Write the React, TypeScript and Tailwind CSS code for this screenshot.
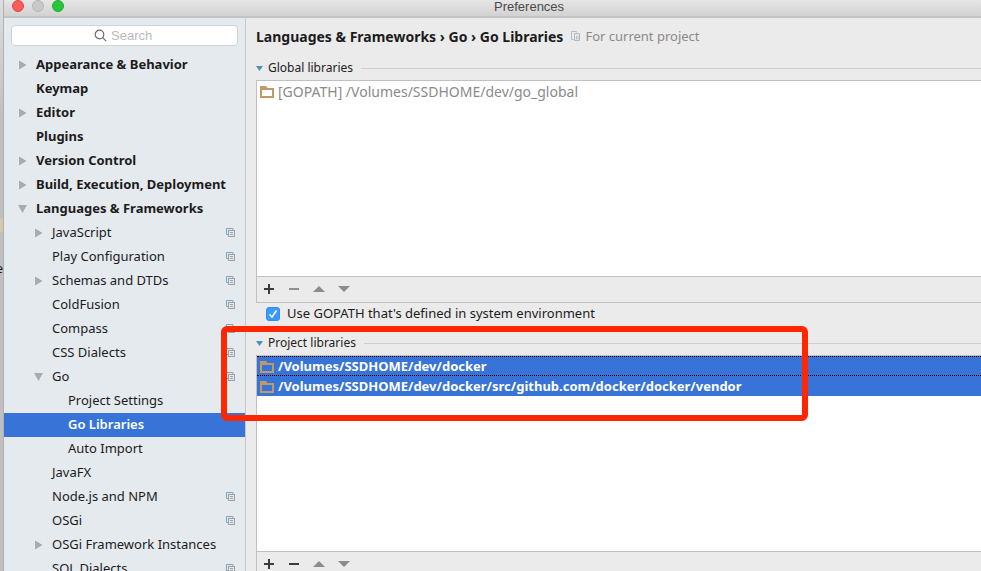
import { useState } from "react";

type Item = {
  label: string;
  level: 0 | 1 | 2;
  arrow?: "open" | "closed";
  project?: boolean;
};

const items: Item[] = [
  { label: "Appearance & Behavior", level: 0, arrow: "closed" },
  { label: "Keymap", level: 0 },
  { label: "Editor", level: 0, arrow: "closed" },
  { label: "Plugins", level: 0 },
  { label: "Version Control", level: 0, arrow: "closed" },
  { label: "Build, Execution, Deployment", level: 0, arrow: "closed" },
  { label: "Languages & Frameworks", level: 0, arrow: "open" },
  { label: "JavaScript", level: 1, arrow: "closed", project: true },
  { label: "Play Configuration", level: 1, project: true },
  { label: "Schemas and DTDs", level: 1, arrow: "closed", project: true },
  { label: "ColdFusion", level: 1, project: true },
  { label: "Compass", level: 1, project: true },
  { label: "CSS Dialects", level: 1, project: true },
  { label: "Go", level: 1, arrow: "open", project: true },
  { label: "Project Settings", level: 2 },
  { label: "Go Libraries", level: 2 },
  { label: "Auto Import", level: 2 },
  { label: "JavaFX", level: 1 },
  { label: "Node.js and NPM", level: 1, project: true },
  { label: "OSGi", level: 1, project: true },
  { label: "OSGi Framework Instances", level: 1, arrow: "closed" },
  { label: "SQL Dialects", level: 1, project: true },
];

const indent = { 0: "pl-3", 1: "pl-7", 2: "pl-11" };

function Arrow({ kind }: { kind?: "open" | "closed" }) {
  return (
    <svg width="12" height="12" viewBox="0 0 12 12" fill="#a9abad" className="shrink-0" aria-hidden="true">
      {kind === "closed" && <path d="M3 1.500l7.500 4.500L3 10.500z" />}
      {kind === "open" && <path d="M2 2h9L6.500 10z" />}
    </svg>
  );
}

function ProjectIcon() {
  return (
    <svg width="10" height="10" viewBox="0 0 10 10" fill="none" className="shrink-0" aria-hidden="true">
      <path d="M2.500 6.500h-2v-6h6.500v2" stroke="#7fa3bb" />
      <rect x="2.500" y="2.500" width="6" height="6" stroke="#9aa0a6" />
      <path d="M4 4.500h3M4 6.500h3" stroke="#9aa0a6" />
    </svg>
  );
}

function CopyIcon() {
  return (
    <svg width="10" height="11" viewBox="0 0 10 11" fill="none" className="shrink-0" aria-hidden="true">
      <path d="M2.500 8.500h-2v-8h5v1" stroke="#a9c0cf" />
      <path d="M3.500 2.500h5v7h-5z" stroke="#b4b7ba" />
      <path d="M5.500 4.500v4M7 4.500v4" stroke="#b4c4d0" />
    </svg>
  );
}

function Folder() {
  return (
    <svg width="14" height="12" viewBox="0 0 14 12" fill="none" className="shrink-0" aria-hidden="true">
      <path d="M0 0h6l1.500 2H14v10H0zM2 4v6h10V4z" fill="#bf9a66" fillRule="evenodd" />
    </svg>
  );
}

function SectionTitle({ children }: { children: string }) {
  return (
    <div className="flex h-5 items-center">
      <svg width="7" height="5" viewBox="0 0 7 5" fill="#4a93bd" className="mr-[5px] shrink-0" aria-hidden="true">
        <path d="M0 0h7L3.500 5z" />
      </svg>
      <h2 className="mr-2 text-[12px] text-[#222]">{children}</h2>
      <div className="h-px flex-1 bg-[#cfcfcf]" />
    </div>
  );
}

function Toolbar({ canRemove }: { canRemove: boolean }) {
  return (
    <div className="flex h-[26px] items-center gap-[11px] border-t border-[#c0c0c0] pb-px pl-[5px]">
      <button type="button" aria-label="Add" className="grid size-[14px] place-items-center">
        <svg width="10" height="10" viewBox="0 0 10 10" fill="#3c3c3c">
          <path d="M4 0h2v4h4v2H6v4H4V6H0V4h4z" />
        </svg>
      </button>
      <button type="button" aria-label="Remove" disabled={!canRemove} className="grid size-[14px] place-items-center">
        <svg width="10" height="10" viewBox="0 0 10 10" fill={canRemove ? "#3c3c3c" : "#8f8f8f"}>
          <path d="M0 4h10v2H0z" />
        </svg>
      </button>
      <button type="button" aria-label="Move up" disabled className="grid size-[14px] place-items-center">
        <svg width="12" height="6" viewBox="0 0 12 6" fill="#8c8c8c">
          <path d="M6 0l6 6H0z" />
        </svg>
      </button>
      <button type="button" aria-label="Move down" disabled className="grid size-[14px] place-items-center">
        <svg width="12" height="6" viewBox="0 0 12 6" fill="#8c8c8c">
          <path d="M0 0h12L6 6z" />
        </svg>
      </button>
    </div>
  );
}

export default function App() {
  const [selected, setSelected] = useState("Go Libraries");
  const [useGopath, setUseGopath] = useState(true);

  return (
    <div className="relative flex h-screen overflow-hidden bg-[#c4c4c4] font-['Noto_Sans','Open_Sans',sans-serif] text-[13px] text-[#1c1c1c]">
      {/* sliver of the window behind */}
      <div className="w-1 shrink-0 overflow-hidden border-r border-[#b0b0b0] bg-gradient-to-b from-[#dedede] to-[#c0c0c0] to-20%">
        <div className="mt-[218px] h-[14px] bg-[#d2c8ae]" />
        <div className="mt-[26px] flex justify-end text-[13px] leading-5">e</div>
      </div>

      <div className="flex min-w-0 flex-1 flex-col">
        <header className="relative flex h-[18px] shrink-0 items-center border-b-2 border-[#c2c2c2] bg-gradient-to-b from-[#e6e6e6] to-[#d2d2d2]">
          <div className="-mt-1 flex gap-2 pl-2">
            <button type="button" aria-label="Close" className="size-3 rounded-full border border-[#e2443f] bg-[#fc5b57]" />
            <button type="button" aria-label="Minimize" className="size-3 rounded-full border border-[#b5b5b5] bg-[#c9c9c9]" />
            <button type="button" aria-label="Zoom" className="size-3 rounded-full border border-[#1fae30] bg-[#27c53b]" />
          </div>
          <h1 className="absolute left-[490px] -top-px font-['Liberation_Sans',sans-serif] text-[13px] leading-4 text-[#4a4a4a]">
            Preferences
          </h1>
        </header>

        <div className="flex min-h-0 flex-1">
          <nav aria-label="Settings" className="w-[242px] shrink-0 overflow-hidden border-r border-[#c3c6cb] bg-[#e5eaee]">
            <label className="mx-[7px] my-[7px] flex h-[21px] items-center justify-center gap-1 rounded-[4px] border border-[#cfd3d7] bg-white font-['Liberation_Sans',sans-serif]">
              <svg width="13" height="13" viewBox="0 0 13 13" fill="none" stroke="#6b6b6b" strokeWidth="1.200" aria-hidden="true">
                <circle cx="5.500" cy="5.500" r="4.300" />
                <path d="M8.600 8.600l3.600 3.600" />
              </svg>
              <input
                type="text"
                aria-label="Search"
                placeholder="Search"
                className="w-11 bg-transparent text-[13px] outline-none placeholder:text-[#b9b9b9]"
              />
            </label>
            <ul>
              {items.map((item) => {
                const active = item.label === selected;
                return (
                  <li key={item.label}>
                    <button
                      type="button"
                      onClick={() => setSelected(item.label)}
                      className={`flex h-6 w-full items-center pr-[9px] text-left whitespace-nowrap ${indent[item.level]} ${
                        item.level === 0 ? "font-bold" : ""
                      } ${active ? "bg-[#3874d7] font-semibold text-white" : ""}`}
                    >
                      <Arrow kind={item.arrow} />
                      <span className="ml-2 flex-1">{item.label}</span>
                      {item.project && <ProjectIcon />}
                    </button>
                  </li>
                );
              })}
            </ul>
          </nav>

          <main className="min-w-0 flex-1 bg-[#ebebeb] pl-[10px]">
            <div className="flex h-10 items-center pb-[3px] whitespace-nowrap">
              <p className="mr-2 text-[14px] font-bold">Languages &amp; Frameworks › Go › Go Libraries</p>
              <CopyIcon />
              <p className="ml-1 text-[#8a8a8a]">For current project</p>
            </div>

            <section>
              <SectionTitle>Global libraries</SectionTitle>
              <div className="mt-[2px] border-y border-l border-[#c0c0c0]">
                <ul className="h-[195px] bg-white">
                  <li className="flex h-5 items-center gap-1 pt-px pl-[3px] text-[14px] text-[#8a8a8a]">
                    <Folder />
                    [GOPATH] /Volumes/SSDHOME/dev/go_global
                  </li>
                </ul>
                <Toolbar canRemove={false} />
              </div>
              <label className="flex h-[22px] items-center gap-[7px] pl-[10px]">
                <span className="grid size-[14px] place-items-center">
                  <input
                    type="checkbox"
                    checked={useGopath}
                    onChange={(e) => setUseGopath(e.target.checked)}
                    className="peer col-start-1 row-start-1 size-[14px] appearance-none rounded-[3px] border border-[#b0b0b0] bg-white checked:border-[#2f8df5] checked:bg-[#3b99fc]"
                  />
                  <svg
                    width="10"
                    height="10"
                    viewBox="0 0 10 10"
                    fill="none"
                    stroke="white"
                    strokeWidth="1.600"
                    className="pointer-events-none invisible col-start-1 row-start-1 peer-checked:visible"
                    aria-hidden="true"
                  >
                    <path d="M1.500 5.500L4 8l4.500-6.500" />
                  </svg>
                </span>
                Use GOPATH that's defined in system environment
              </label>
            </section>

            <section className="mt-2">
              <SectionTitle>Project libraries</SectionTitle>
              <div className="mt-[2px] border-y border-l border-[#c0c0c0]">
                <ul className="h-[195px] bg-white font-bold text-white">
                  <li className="flex h-5 items-center gap-1 border-y border-dotted border-black bg-[#3874d7] pt-px pl-[3px]">
                    <Folder />
                    /Volumes/SSDHOME/dev/docker
                  </li>
                  <li className="flex h-5 items-center gap-1 bg-[#3874d7] pt-px pl-[3px]">
                    <Folder />
                    /Volumes/SSDHOME/dev/docker/src/github.com/docker/docker/vendor
                  </li>
                </ul>
                <Toolbar canRemove />
              </div>
            </section>
          </main>
        </div>
      </div>

      {/* highlight frame laid over the window */}
      <div className="pointer-events-none absolute top-[326px] left-[221px] h-[95px] w-[587px] rounded-[6px] border-6 border-[#ff2600]" />
    </div>
  );
}
